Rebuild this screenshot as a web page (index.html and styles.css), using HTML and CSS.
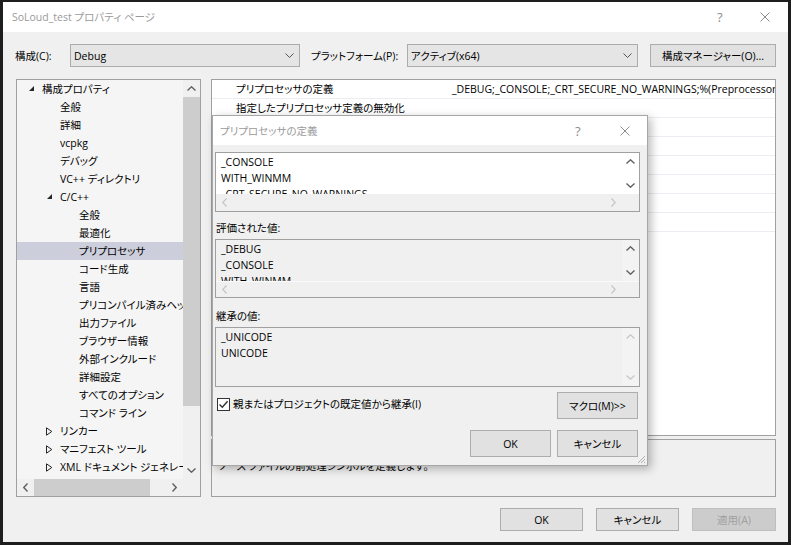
FILE: index.html
```html
<!DOCTYPE html>
<html lang="ja">
<head>
<meta charset="utf-8">
<title>SoLoud_test プロパティ ページ</title>
<link rel="stylesheet" href="styles.css">
</head>
<body>
<div class="screen">
  <div class="window">
    <div class="titlebar">
      <span class="title">SoLoud_test プロパティ ページ</span>
      <span class="cap-help">?</span>
      <svg class="cap-close" width="10" height="10" viewBox="0 0 10 10"><path d="M0.5 0.5L9.5 9.5M9.5 0.5L0.5 9.5" stroke="#8c8c8c" stroke-width="1"/></svg>
    </div>

    <div class="toolbar">
      <span class="tlabel tlabel-cfg">構成(C):</span>
      <div class="combo combo-cfg"><span class="combo-text">Debug</span><svg class="chev" width="9" height="5" viewBox="0 0 9 5"><path d="M0.5 0.5L4.5 4.5L8.5 0.5" fill="none" stroke="#555" stroke-width="1"/></svg></div>
      <span class="tlabel tlabel-plat">プラットフォーム(P):</span>
      <div class="combo combo-plat"><span class="combo-text">アクティブ(x64)</span><svg class="chev" width="9" height="5" viewBox="0 0 9 5"><path d="M0.5 0.5L4.5 4.5L8.5 0.5" fill="none" stroke="#555" stroke-width="1"/></svg></div>
      <button class="btn btn-mgr">構成マネージャー(O)...</button>
    </div>

    <div class="main">
      <div class="tree">
        <div class="tree-top">
          <div class="tree-list">
            <div class="trow l0"><span class="exp"><svg width="6" height="6" viewBox="0 0 6 6"><path d="M5 0V5H0Z" fill="#262626"/></svg></span><span>構成プロパティ</span></div>
            <div class="trow l1"><span class="exp"></span><span>全般</span></div>
            <div class="trow l1"><span class="exp"></span><span>詳細</span></div>
            <div class="trow l1"><span class="exp"></span><span>vcpkg</span></div>
            <div class="trow l1"><span class="exp"></span><span>デバッグ</span></div>
            <div class="trow l1"><span class="exp"></span><span>VC++ ディレクトリ</span></div>
            <div class="trow l1"><span class="exp"><svg width="6" height="6" viewBox="0 0 6 6"><path d="M5 0V5H0Z" fill="#262626"/></svg></span><span>C/C++</span></div>
            <div class="trow l2"><span class="exp"></span><span>全般</span></div>
            <div class="trow l2"><span class="exp"></span><span>最適化</span></div>
            <div class="trow l2 sel"><span class="exp"></span><span>プリプロセッサ</span></div>
            <div class="trow l2"><span class="exp"></span><span>コード生成</span></div>
            <div class="trow l2"><span class="exp"></span><span>言語</span></div>
            <div class="trow l2"><span class="exp"></span><span>プリコンパイル済みヘッダー</span></div>
            <div class="trow l2"><span class="exp"></span><span>出力ファイル</span></div>
            <div class="trow l2"><span class="exp"></span><span>ブラウザー情報</span></div>
            <div class="trow l2"><span class="exp"></span><span>外部インクルード</span></div>
            <div class="trow l2"><span class="exp"></span><span>詳細設定</span></div>
            <div class="trow l2"><span class="exp"></span><span>すべてのオプション</span></div>
            <div class="trow l2"><span class="exp"></span><span>コマンド ライン</span></div>
            <div class="trow l1"><span class="exp"><svg width="7" height="9" viewBox="0 0 7 9"><path d="M0.5 0.8V8.2L5.8 4.5Z" fill="none" stroke="#262626" stroke-width="1"/></svg></span><span>リンカー</span></div>
            <div class="trow l1"><span class="exp"><svg width="7" height="9" viewBox="0 0 7 9"><path d="M0.5 0.8V8.2L5.8 4.5Z" fill="none" stroke="#262626" stroke-width="1"/></svg></span><span>マニフェスト ツール</span></div>
            <div class="trow l1"><span class="exp"><svg width="7" height="9" viewBox="0 0 7 9"><path d="M0.5 0.8V8.2L5.8 4.5Z" fill="none" stroke="#262626" stroke-width="1"/></svg></span><span>XML ドキュメント ジェネレーター</span></div>
            <div class="trow l1"><span class="exp"><svg width="7" height="9" viewBox="0 0 7 9"><path d="M0.5 0.8V8.2L5.8 4.5Z" fill="none" stroke="#262626" stroke-width="1"/></svg></span><span>ブラウザー情報</span></div>
          </div>
          <div class="vsb tree-vsb">
            <span class="sbtn"><svg width="9" height="5" viewBox="0 0 9 5"><path d="M0.5 4.5L4.5 0.8L8.5 4.5" fill="none" stroke="#606060" stroke-width="1.4"/></svg></span>
            <div class="vtrack"><div class="vthumb"></div></div>
            <span class="sbtn"><svg width="9" height="5" viewBox="0 0 9 5"><path d="M0.5 0.5L4.5 4.2L8.5 0.5" fill="none" stroke="#606060" stroke-width="1.4"/></svg></span>
          </div>
        </div>
        <div class="tree-hsb">
          <span class="sbtn"><svg width="5" height="9" viewBox="0 0 5 9"><path d="M4.5 0.5L0.8 4.5L4.5 8.5" fill="none" stroke="#606060" stroke-width="1.4"/></svg></span>
          <div class="htrack"><div class="hthumb"></div></div>
          <span class="sbtn"><svg width="5" height="9" viewBox="0 0 5 9"><path d="M0.5 0.5L4.2 4.5L0.5 8.5" fill="none" stroke="#606060" stroke-width="1.4"/></svg></span>
          <span class="corner"></span>
        </div>
      </div>

      <div class="right">
        <div class="grid">
          <div class="grow"><span class="gname">プリプロセッサの定義</span><span class="gval">_DEBUG;_CONSOLE;_CRT_SECURE_NO_WARNINGS;%(PreprocessorDefinitions)</span></div>
          <div class="grow"><span class="gname">指定したプリプロセッサ定義の無効化</span><span class="gval"></span></div>
          <div class="grow"><span class="gname">すべてのプリプロセッサ定義の無効化</span><span class="gval">いいえ</span></div>
          <div class="grow"><span class="gname">インクルード ファイルへの完全パスを使用する</span><span class="gval">いいえ</span></div>
          <div class="grow"><span class="gname">プリプロセス (ファイルへ)</span><span class="gval">いいえ</span></div>
          <div class="grow"><span class="gname">プリプロセス (行番号なし)</span><span class="gval">いいえ</span></div>
          <div class="grow"><span class="gname">コメントを保持する</span><span class="gval">いいえ</span></div>
          <div class="grow"><span class="gname">標準準拠のプリプロセッサを使用する</span><span class="gval"></span></div>
        </div>
        <div class="desc">
          <div class="desc-title">プリプロセッサの定義</div>
          <div class="desc-text">ソース ファイルの前処理シンボルを定義します。</div>
        </div>
      </div>
    </div>

    <div class="footer">
      <button class="btn fbtn">OK</button>
      <button class="btn fbtn">キャンセル</button>
      <button class="btn fbtn disabled">適用(A)</button>
    </div>
  </div>

  <div class="dialog">
    <div class="dtitlebar">
      <span class="title">プリプロセッサの定義</span>
      <span class="cap-help dhelp">?</span>
      <svg class="cap-close dclose" width="10" height="10" viewBox="0 0 10 10"><path d="M0.5 0.5L9.5 9.5M9.5 0.5L0.5 9.5" stroke="#8c8c8c" stroke-width="1"/></svg>
    </div>
    <div class="dbody">
      <div class="lbox box-edit">
        <div class="lbox-top">
          <div class="lbox-text">
            <div>_CONSOLE</div>
            <div>WITH_WINMM</div>
            <div>_CRT_SECURE_NO_WARNINGS</div>
          </div>
          <div class="vsb box-vsb">
            <span class="sbtn"><svg width="9" height="5" viewBox="0 0 9 5"><path d="M0.5 4.5L4.5 0.8L8.5 4.5" fill="none" stroke="#606060" stroke-width="1.4"/></svg></span>
            <span class="sbtn"><svg width="9" height="5" viewBox="0 0 9 5"><path d="M0.5 0.5L4.5 4.2L8.5 0.5" fill="none" stroke="#606060" stroke-width="1.4"/></svg></span>
          </div>
        </div>
        <div class="box-hsb">
          <span class="sbtn"><svg width="5" height="9" viewBox="0 0 5 9"><path d="M4.5 0.5L0.8 4.5L4.5 8.5" fill="none" stroke="#c6c6c6" stroke-width="1.2"/></svg></span>
          <span class="sbtn"><svg width="5" height="9" viewBox="0 0 5 9"><path d="M0.5 0.5L4.2 4.5L0.5 8.5" fill="none" stroke="#c6c6c6" stroke-width="1.2"/></svg></span>
          <span class="corner"></span>
        </div>
      </div>

      <div class="dlabel lbl-eval">評価された値:</div>
      <div class="lbox box-ro box-eval">
        <div class="lbox-top">
          <div class="lbox-text">
            <div>_DEBUG</div>
            <div>_CONSOLE</div>
            <div>WITH_WINMM</div>
          </div>
          <div class="vsb box-vsb">
            <span class="sbtn"><svg width="9" height="5" viewBox="0 0 9 5"><path d="M0.5 4.5L4.5 0.8L8.5 4.5" fill="none" stroke="#606060" stroke-width="1.4"/></svg></span>
            <span class="sbtn"><svg width="9" height="5" viewBox="0 0 9 5"><path d="M0.5 0.5L4.5 4.2L8.5 0.5" fill="none" stroke="#606060" stroke-width="1.4"/></svg></span>
          </div>
        </div>
        <div class="box-hsb">
          <span class="sbtn"><svg width="5" height="9" viewBox="0 0 5 9"><path d="M4.5 0.5L0.8 4.5L4.5 8.5" fill="none" stroke="#c6c6c6" stroke-width="1.2"/></svg></span>
          <span class="sbtn"><svg width="5" height="9" viewBox="0 0 5 9"><path d="M0.5 0.5L4.2 4.5L0.5 8.5" fill="none" stroke="#c6c6c6" stroke-width="1.2"/></svg></span>
          <span class="corner"></span>
        </div>
      </div>

      <div class="dlabel lbl-inh">継承の値:</div>
      <div class="lbox box-ro box-inh">
        <div class="lbox-top">
          <div class="lbox-text">
            <div>_UNICODE</div>
            <div>UNICODE</div>
          </div>
          <div class="vsb box-vsb">
            <span class="sbtn"><svg width="9" height="5" viewBox="0 0 9 5"><path d="M0.5 4.5L4.5 0.8L8.5 4.5" fill="none" stroke="#c6c6c6" stroke-width="1.2"/></svg></span>
            <span class="sbtn"><svg width="9" height="5" viewBox="0 0 9 5"><path d="M0.5 0.5L4.5 4.2L8.5 0.5" fill="none" stroke="#c6c6c6" stroke-width="1.2"/></svg></span>
          </div>
        </div>
      </div>

      <div class="drow-check">
        <label class="check">
          <span class="cbox"><svg width="11" height="11" viewBox="0 0 11 11"><path d="M1.5 5.5L4.3 8.3L9.6 2.2" fill="none" stroke="#333" stroke-width="1.4"/></svg></span>
          <span>親またはプロジェクトの既定値から継承(I)</span>
        </label>
        <button class="btn dbtn">マクロ(M)&gt;&gt;</button>
      </div>

      <div class="drow-btns">
        <button class="btn dbtn">OK</button>
        <button class="btn dbtn">キャンセル</button>
      </div>
      <svg class="grip" width="9" height="9" viewBox="0 0 9 9"><path d="M8 1L1 8M8 4L4 8M8 7L7 8" stroke="#b0b0b0" stroke-width="1"/></svg>
    </div>
  </div>
</div>
</body>
</html>
```

FILE: styles.css
```css
* { box-sizing: border-box; }

html, body {
  margin: 0;
  padding: 0;
  background: #1e1e1e;
}

body {
  font-family: "Open Sans", "Noto Sans CJK JP", sans-serif;
  font-size: 10.5px;
  font-feature-settings: "palt";
  color: #000;
}

.screen {
  position: relative;
  width: 791px;
  height: 545px;
  overflow: hidden;
  padding: 2px 0 0 3px;
  background: #1e1e1e;
}

.window {
  width: 785px;
  height: 540px;
  background: #f0f0f0;
  display: flex;
  flex-direction: column;
}

/* title bars */
.titlebar {
  height: 30px;
  background: #fff;
  display: flex;
  align-items: center;
  padding: 0 18px 0 9px;
  flex: none;
}
.title {
  color: #9a9a9a;
  font-size: 10.5px;
  line-height: 16px;
}
.cap-help {
  margin-left: auto;
  color: #8c8c8c;
  font-size: 13px;
  line-height: 16px;
  width: 7px;
}
.cap-close {
  margin-left: 36px;
  display: block;
}

/* toolbar */
.toolbar {
  margin-top: 12px;
  height: 23px;
  display: flex;
  align-items: center;
  padding-left: 12px;
  flex: none;
}
.tlabel {
  line-height: 16px;
  white-space: nowrap;
}
.tlabel-cfg { width: 55px; }
.tlabel-plat { width: 96px; margin-left: 11px; }
.combo {
  height: 23px;
  background: #e5e5e5;
  border: 1px solid #acacac;
  display: flex;
  align-items: center;
  padding: 0 0 0 3px;
}
.combo-cfg { width: 230px; }
.combo-plat { width: 231px; }
.combo-text { line-height: 16px; }
.chev { margin-left: auto; margin-right: 5px; display: block; }

.btn {
  font: inherit;
  color: #000;
  background: #e1e1e1;
  border: 1px solid #adadad;
  padding: 0;
  line-height: 16px;
  white-space: nowrap;
}
.btn-mgr {
  margin-left: 12px;
  width: 126px;
  height: 23px;
}

/* main */
.main {
  margin-top: 12px;
  margin-left: 13px;
  display: flex;
  gap: 10px;
  height: 418px;
  flex: none;
}

.tree {
  width: 185px;
  height: 418px;
  border: 1px solid #a0a0a0;
  background: #f5f5f5;
  display: flex;
  flex-direction: column;
}
.tree-top {
  display: flex;
  height: 399px;
}
.tree-list {
  width: 166px;
  overflow: hidden;
  white-space: nowrap;
}
.trow {
  height: 18px;
  line-height: 18px;
  display: flex;
  align-items: center;
}
.trow.l0 { padding-left: 10px; }
.trow.l1 { padding-left: 28px; }
.trow.l2 { padding-left: 47px; }
.trow.sel { background: #cccedb; }
.exp {
  width: 15px;
  flex: none;
  display: flex;
  align-items: center;
  padding-left: 2px;
}
.trow.l1 .exp svg[height="9"] { margin-left: -1px; }
.exp svg { display: block; }

.vsb {
  width: 17px;
  flex: none;
  display: flex;
  flex-direction: column;
  justify-content: space-between;
}
.tree-vsb { background: #f0f0f0; }
.sbtn {
  width: 17px;
  height: 17px;
  display: flex;
  align-items: center;
  justify-content: center;
  flex: none;
}
.sbtn svg { display: block; }
.vtrack { flex: 1; }
.vthumb {
  height: 309px;
  background: #cdcdcd;
}
.tree-hsb {
  display: flex;
  height: 17px;
  background: #f0f0f0;
}
.htrack {
  width: 132px;
  display: flex;
}
.hthumb {
  width: 116px;
  height: 17px;
  background: #cdcdcd;
}
.corner { width: 17px; height: 100%; flex: none; margin-left: auto; background: #f0f0f0; }

.right {
  width: 565px;
  display: flex;
  flex-direction: column;
  gap: 3px;
}
.grid {
  height: 357px;
  border: 1px solid #a0a0a0;
  background: #fff;
  overflow: hidden;
}
.grow {
  height: 19px;
  display: flex;
  border-bottom: 1px solid #ececf2;
  line-height: 18px;
}
.gname {
  width: 236px;
  padding-left: 24px;
  overflow: hidden;
  white-space: nowrap;
  flex: none;
}
.gval {
  padding-left: 4px;
  white-space: nowrap;
  overflow: hidden;
  flex: 1;
}
.desc {
  height: 58px;
  border: 1px solid #a0a0a0;
  background: #f0f0f0;
  padding: 2px 0 0 6px;
  line-height: 16px;
}
.desc-title { font-weight: bold; }

.footer {
  margin-top: 11px;
  display: flex;
  justify-content: flex-end;
  gap: 13px;
  padding-right: 12px;
}
.fbtn {
  width: 83px;
  height: 23px;
}
.fbtn:last-child { width: 84px; }
.btn.disabled {
  background: #cccccc;
  border-color: #bfbfbf;
  color: #a0a0a0;
}

/* dialog (floats over the window) */
.dialog {
  position: absolute;
  left: 212px;
  top: 115px;
  width: 436px;
  height: 351px;
  background: #f0f0f0;
  border: 1px solid #a6a6a6;
  box-shadow: 3px 3px 9px rgba(0, 0, 0, 0.28);
  display: flex;
  flex-direction: column;
}
.dtitlebar {
  height: 29px;
  background: #fff;
  display: flex;
  align-items: center;
  padding: 0 17px 0 7px;
  flex: none;
}
.dclose { margin-left: 38px; }

.dbody {
  position: relative;
  flex: 1;
  display: flex;
  flex-direction: column;
  padding-left: 2px;
}
.lbox {
  width: 425px;
  border: 1px solid #a0a0a0;
  display: flex;
  flex-direction: column;
  flex: none;
}
.box-edit { margin-top: 7px; height: 60px; background: #fff; }
.box-eval { height: 59px; }
.box-inh { height: 60px; }
.box-ro { background: #f0f0f0; }
.lbox-top {
  display: flex;
  height: 41px;
}
.box-inh .lbox-top { height: 58px; }
.lbox-text {
  flex: 1;
  overflow: hidden;
  padding: 1px 0 0 5px;
  line-height: 16px;
  white-space: nowrap;
}
.box-edit .box-vsb { background: #fff; }
.box-ro .box-vsb { background: #f3f3f3; }
.box-hsb {
  display: flex;
  height: 17px;
  background: #f0f0f0;
}
.box-eval .box-hsb { height: 16px; border-top: 1px solid #fafafa; }
.box-hsb .sbtn { height: 100%; }
.box-hsb .sbtn + .sbtn { margin-left: auto; }
.box-hsb .corner { margin-left: 0; }

.dlabel {
  line-height: 16px;
  padding-left: 1px;
}
.lbl-eval { margin-top: 8px; margin-bottom: 3px; }
.lbl-inh { margin-top: 10px; margin-bottom: 3px; }

.drow-check {
  margin-top: 5px;
  display: flex;
  align-items: flex-start;
  width: 433px;
  padding-right: 10px;
}
.check {
  display: flex;
  align-items: center;
  gap: 3px;
  margin-top: 4px;
  margin-left: 2px;
  line-height: 16px;
}
.cbox {
  width: 13px;
  height: 13px;
  border: 1px solid #333;
  background: #fff;
  display: flex;
  align-items: center;
  justify-content: center;
}
.cbox svg { display: block; }
.dbtn {
  width: 81px;
  height: 27px;
}
.drow-check .dbtn { margin-left: auto; }
.drow-btns {
  margin-top: 11px;
  display: flex;
  justify-content: flex-end;
  gap: 6px;
  width: 433px;
  padding-right: 10px;
}
.grip {
  position: absolute;
  right: 1px;
  bottom: 1px;
}
```
